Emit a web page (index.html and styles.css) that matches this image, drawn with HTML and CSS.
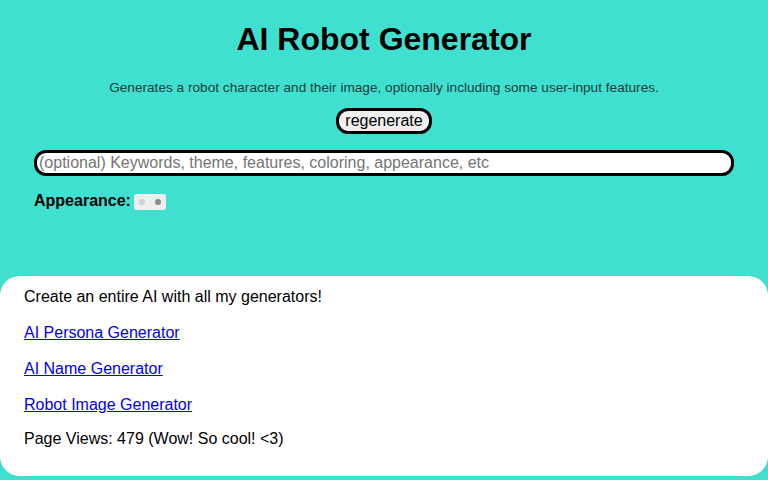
FILE: index.html
```html
<!DOCTYPE html>
<html>
<head>
<meta charset="utf-8">
<link rel="stylesheet" href="styles.css">
</head>
<body>
<div class="top">
  <h1 class="title">AI Robot Generator</h1>
  <p class="sub">Generates a robot character and their image, optionally including some user-input features.</p>
  <div class="btnrow"><button class="regen">regenerate</button></div>
  <input class="kw" type="text" placeholder="(optional) Keywords, theme, features, coloring, appearance, etc">
  <div class="appear"><b>Appearance:</b><span class="toggle"><i class="dot d1"></i><i class="dot d2"></i></span></div>
</div>
<div class="panel">
  <p class="line">Create an entire AI with all my generators!</p>
  <p class="line"><a href="#">AI Persona Generator</a></p>
  <p class="line"><a href="#">AI Name Generator</a></p>
  <p class="line"><a href="#">Robot Image Generator</a></p>
  <p class="line views">Page Views: 479 (Wow! So cool! &lt;3)</p>
</div>
</body>
</html>
```
FILE: styles.css
```css
html, body { margin: 0; padding: 0; }
body {
  background: #40e0d0;
  font-family: "Liberation Sans", Arial, sans-serif;
  color: #000;
  width: 768px;
  height: 480px;
  overflow: hidden;
}
.top { padding: 0 34px; height: 276px; box-sizing: border-box; }
.title {
  margin: 0;
  padding-top: 20px;
  text-align: center;
  font-size: 32px;
  line-height: 38px;
  font-weight: bold;
}
.sub {
  margin: 21px 0 0;
  text-align: center;
  font-size: 13.65px;
  line-height: 18px;
  color: #1c3d3d;
}
.btnrow { display: flex; justify-content: center; margin-top: 11px; }
.regen {
  font-family: "Liberation Sans", Arial, sans-serif;
  font-size: 16px;
  line-height: 18px;
  height: 26px;
  padding: 0 6px;
  border: 3px solid #000;
  border-radius: 12px;
  background: #efefef;
  color: #000;
}
.kw {
  display: block;
  box-sizing: border-box;
  width: 700px;
  height: 26px;
  margin-top: 16px;
  border: 3px solid #000;
  border-radius: 12px;
  padding: 0 2px;
  font-family: "Liberation Sans", Arial, sans-serif;
  font-size: 16px;
  background: #fff;
}
.kw::placeholder { color: #757575; }
.appear {
  display: flex;
  align-items: center;
  margin-top: 15px;
  font-size: 16px;
  line-height: 20px;
}
.toggle {
  display: inline-flex;
  align-items: center;
  gap: 10px;
  margin-left: 3px;
  margin-top: 2px;
  width: 32px;
  height: 16px;
  box-sizing: border-box;
  padding: 0 5px;
  background: #efefef;
  border-radius: 3px;
}
.dot { display: block; width: 6px; height: 6px; border-radius: 50%; }
.d1 { background: #d0d0d0; }
.d2 { background: #8a8a8a; }
.panel {
  background: #fff;
  height: 200px;
  border-radius: 20px;
  padding: 12px 24px 0;
  box-sizing: border-box;
}
.line { margin: 0 0 18px; font-size: 16px; line-height: 18px; }
.line.views { margin-top: -2px; }
.line a { color: #0000ee; }
```
